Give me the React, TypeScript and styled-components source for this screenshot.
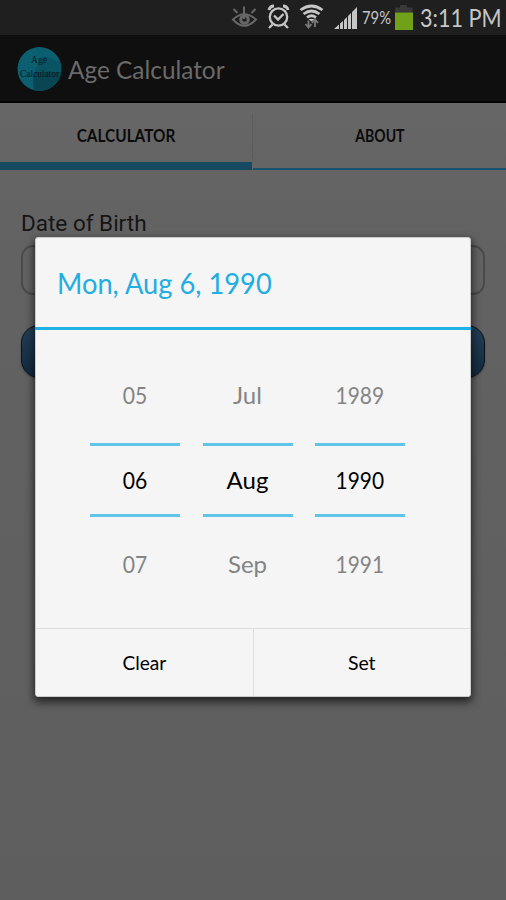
import React from "react";
import styled, { createGlobalStyle } from "styled-components";

const Global = createGlobalStyle`
  * { box-sizing: border-box; }
  body { margin: 0; background: #5f5f5f; font-family: Lato, "Liberation Sans", sans-serif; }
`;

const Screen = styled.div`
  width: 506px;
  height: 900px;
  overflow: hidden;
  position: relative;
  background: linear-gradient(#666 100px, #626262 250px, #5e5e5e 900px);
`;

const Label = styled.span<{ $size: number; $sx?: number; $left?: boolean; $weight?: number }>`
  display: block;
  white-space: pre;
  line-height: 1;
  font-size: ${(p) => p.$size}px;
  transform: scaleX(${(p) => p.$sx ?? 1});
  transform-origin: ${(p) => (p.$left ? "left" : "center")} center;
  -webkit-text-stroke: ${(p) => p.$weight ?? 0}px currentColor;
`;

const StatusBar = styled.header`
  height: 35px;
  background: #1f1f1f;
  color: #c6c6c6;
  display: flex;
  align-items: center;
`;

const StatusIcons = styled.svg`
  display: block;
  flex: none;
  margin-left: 228px;
`;

const Percent = styled.div`
  width: 34px;
  flex: none;
  padding-left: 2px;
`;

const Battery = styled.svg`
  display: block;
  flex: none;
`;

const Clock = styled.div`
  flex: none;
  padding: 0 0 0 5px;
`;

const TitleBar = styled.div`
  height: 68px;
  background: #0f0f0f;
  border-bottom: 2px solid #020202;
  color: #6a6a6a;
  display: flex;
  align-items: center;
  padding: 2px 0 0 17px;
  gap: 6px;
`;

const Logo = styled.svg`
  display: block;
  flex: none;
  overflow: visible;
`;

const Tabs = styled.nav`
  height: 67px;
  display: flex;
`;

const Tab = styled.div<{ $active?: boolean }>`
  width: ${(p) => (p.$active ? 252 : 253)}px;
  display: flex;
  align-items: center;
  justify-content: center;
  padding-top: ${(p) => (p.$active ? 8 : 2)}px;
  color: #0a0a0a;
  font-weight: 700;
  border-bottom: ${(p) => (p.$active ? "8px solid #154a60" : "2px solid #15536e")};
`;

const TabRule = styled.i`
  width: 1px;
  height: 45px;
  margin-top: 11px;
  background: #5c5c5c;
`;

const Form = styled.main`
  padding: 42px 21px 0;
  color: #151515;
  font-family: Roboto, sans-serif;
`;

const DateField = styled.div`
  margin-top: 10px;
  height: 50px;
  border: 2px solid #4a4a4a;
  border-radius: 12px;
`;

const SubmitButton = styled.div`
  margin-top: 30px;
  height: 53px;
  border: 1px solid #07131f;
  border-radius: 18px;
  background: linear-gradient(#233f56, #14283c);
  box-shadow: 0 1px 2px #444;
`;

const Dialog = styled.section`
  position: absolute;
  left: 35px;
  top: 237px;
  width: 436px;
  height: 460px;
  border: 1px solid #ccc;
  border-radius: 3px;
  background: #f5f5f5;
  box-shadow: 0 4px 9px 1px rgba(0, 0, 0, 0.65);
  display: flex;
  flex-direction: column;
  color: #000;
`;

const DialogTitle = styled.h1`
  margin: 0 -1px;
  height: 92px;
  flex: none;
  padding: 0 0 0 22px;
  display: flex;
  align-items: center;
  font-weight: 400;
  color: #23ade1;
  border-bottom: 3px solid #20b0e2;
`;

const Picker = styled.div`
  flex: 1;
  display: flex;
  gap: 22.500px;
  padding: 24px 0 0 54px;
`;

const Wheel = styled.div`
  width: 90px;
`;

const WheelItem = styled.div<{ $kind: "prev" | "current" | "next" }>`
  height: ${(p) => (p.$kind === "current" ? 74 : 89)}px;
  display: flex;
  align-items: center;
  justify-content: center;
  color: ${(p) => (p.$kind === "current" ? "#000" : "#848484")};
  border: solid #5fc4e7;
  border-width: ${(p) => (p.$kind === "current" ? "3px 0" : "0")};
  padding-bottom: ${(p) => (p.$kind === "prev" ? 8 : 0)}px;
  padding-top: ${(p) => (p.$kind === "next" ? 5 : 0)}px;
`;

const Actions = styled.footer`
  height: 68px;
  display: flex;
  border-top: 1px solid #dedede;
`;

const Action = styled.div`
  flex: 1;
  display: flex;
  align-items: center;
  justify-content: center;
  & + & { border-left: 1px solid #dedede; }
`;

const wheels = [
  { scale: 0.88, items: ["05", "06", "07"] },
  { scale: 1, items: ["Jul", "Aug", "Sep"] },
  { scale: 0.87, items: ["1989", "1990", "1991"] },
];
const kinds = ["prev", "current", "next"] as const;

export default function App() {
  return (
    <Screen>
      <Global />
      <StatusBar>
        <StatusIcons width="132" height="35" viewBox="228 0 132 35" fill="none">
          <g stroke="#666" strokeWidth="2">
            <path d="M233 19.500Q244 9 256 19.500Q244 32 233 19.500Z" />
            <circle cx="244.500" cy="19.500" r="3.800" strokeWidth="3" />
            <path d="M233.500 9l4 4M244 6.500V19M255.500 9l-4 4" />
          </g>
          <g stroke="#c6c6c6" strokeWidth="2.300">
            <circle cx="278.500" cy="17" r="8.700" />
            <path d="M274 15.500l4 4 5.500-5.500M272.500 24.500l-3.500 3.500M284.500 24.500l3.500 3.500" />
            <path d="M269 10q1-4 5-4M283 6q4 0 5 4" strokeWidth="3" />
          </g>
          <g stroke="#c6c6c6" strokeWidth="2.700">
            <path d="M300.500 10q11-8 22 0M303.500 14q8-6 16 0M307 17.500q4.500-3.500 9 0" />
          </g>
          <path d="M308.500 19h6l-3 2.500z" fill="#c6c6c6" />
          <path d="M308.500 20.500v6.500M305.500 24l3 3.500 3-3.500M315 27v-7M312 23l3-3.500 3 3.500" stroke="#777" strokeWidth="1.900" />
          <path d="M334 29l5-4.500V29zM340 23.500l3-2.500v8h-3zM344 20l3-3v12h-3zM348 16l3-3v16h-3zM352 12l5-5v22h-5z" fill="#c6c6c6" />
        </StatusIcons>
        <Percent><Label $size={17} $sx={0.87} $left>79%</Label></Percent>
        <Battery width="21" height="35" viewBox="394 0 21 35">
          <path d="M395 7.500h5V5h7v2.500h5.500v5H395z" fill="#383838" />
          <path d="M395 12.500h18V30h-18z" fill="#71a019" />
        </Battery>
        <Clock><Label $size={25} $sx={0.865} $left>3:11 PM</Label></Clock>
      </StatusBar>
      <TitleBar>
        <Logo width="45" height="45" viewBox="0 0 45 45">
          <circle cx="22.500" cy="22" r="22" fill="#0c5f70" />
          <path d="M17 43Q14 22 27 9L43 15Q47 35 30 42.500Q23 45 17 43Z" fill="#0a5363" />
          <path d="M17 43Q15 33 18 25H44Q43 37 30 42.500Q23 45 17 43Z" fill="#0a4553" />
          <text x="14" y="16" fontFamily="Liberation Serif, serif" fontSize="11" textLength="16" lengthAdjust="spacingAndGlyphs" fill="#07191e">Age</text>
          <text x="3" y="30" fontFamily="Liberation Serif, serif" fontSize="10.500" textLength="39" lengthAdjust="spacingAndGlyphs" fill="#07191e">Calculator</text>
        </Logo>
        <Label $size={25} $sx={0.975} $left>Age Calculator</Label>
      </TitleBar>
      <Tabs>
        <Tab $active><Label $size={16.500} $sx={0.93}>CALCULATOR</Label></Tab>
        <TabRule />
        <Tab><Label $size={16.500} $sx={0.85}>ABOUT</Label></Tab>
      </Tabs>
      <Form>
        <Label $size={22.500}>Date of Birth</Label>
        <DateField />
        <SubmitButton />
      </Form>
      <Dialog>
        <DialogTitle><Label $size={29.500} $sx={0.925} $left>Mon, Aug 6, 1990</Label></DialogTitle>
        <Picker>
          {wheels.map((w) => (
            <Wheel key={w.items[1]}>
              {w.items.map((t, i) => (
                <WheelItem key={t} $kind={kinds[i]}><Label $size={24} $sx={w.scale}>{t}</Label></WheelItem>
              ))}
            </Wheel>
          ))}
        </Picker>
        <Actions>
          <Action><Label $size={19.500} $sx={0.98}>Clear</Label></Action>
          <Action><Label $size={19.500}>Set</Label></Action>
        </Actions>
      </Dialog>
    </Screen>
  );
}
